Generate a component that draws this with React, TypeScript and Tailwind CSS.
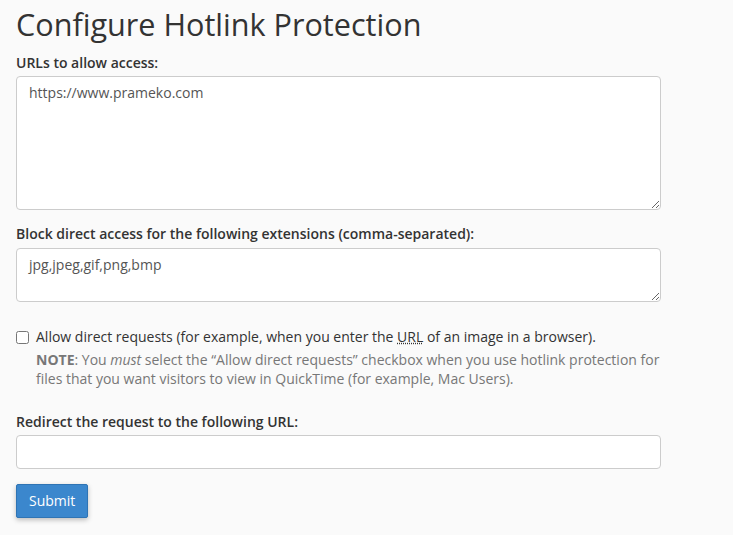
export default function App() {
  return (
    <div
      className="min-h-screen w-full bg-[#fafafa] text-[#333] px-4"
      style={{ fontFamily: '"Open Sans", "Liberation Sans", sans-serif' }}
    >
      <h1 className="text-[30.6px] leading-[1.1] font-normal pt-[8px] mb-[11px] text-[#333]">
        Configure Hotlink Protection
      </h1>

      <div className="w-[645px]">
        <label className="block text-[14px] font-semibold mb-[3px] leading-5">
          URLs to allow access:
        </label>
        <textarea
          className="block w-full h-[134px] rounded-[4px] border border-[#ccc] bg-white px-3 py-[6px] text-[14px] leading-[1.43] text-[#555] resize-y"
          defaultValue="https://www.prameko.com"
        />

        <label className="block text-[14px] font-semibold mt-[14px] mb-[4px] leading-5">
          Block direct access for the following extensions (comma-separated):
        </label>
        <textarea
          className="block w-full h-[54px] rounded-[4px] border border-[#ccc] bg-white px-3 py-[6px] text-[14px] leading-[1.43] text-[#555] resize-y"
          defaultValue="jpg,jpeg,gif,png,bmp"
        />

        <div className="mt-[25px] flex items-start gap-[7px]">
          <input type="checkbox" className="mt-[4px] w-[13px] h-[13px] shrink-0" />
          <div className="text-[14px] leading-5">
            <div>
              Allow direct requests (for example, when you enter the{" "}
              <abbr title="Uniform Resource Locator" className="underline decoration-dotted">
                URL
              </abbr>{" "}
              of an image in a browser).
            </div>
            <p className="mt-[3px] text-[#777] text-[14px] leading-[19px]">
              <strong className="font-bold">NOTE</strong>: You <em>must</em> select the “Allow direct
              requests” checkbox when you use hotlink protection for files that you want visitors to
              view in QuickTime (for example, Mac Users).
            </p>
          </div>
        </div>

        <label className="block text-[14px] font-semibold mt-[24px] mb-[3px] leading-5">
          Redirect the request to the following URL:
        </label>
        <input
          type="text"
          className="block w-full h-[34px] rounded-[4px] border border-[#ccc] bg-white px-3 text-[14px] text-[#555]"
        />

        <button
          type="button"
          className="mt-[15px] h-[34px] px-3 rounded-[2px] bg-[#3b87cd] border border-[#2f74b4] text-white text-[14px] shadow-[0_2px_5px_rgba(0,0,0,0.25)]"
        >
          Submit
        </button>
      </div>
    </div>
  );
}
